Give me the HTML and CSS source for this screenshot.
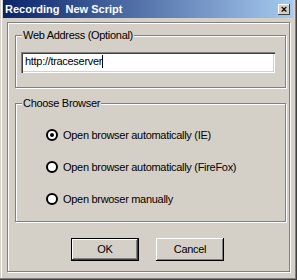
FILE: index.html
```html
<!DOCTYPE html>
<html>
<head>
<title>Recording New Script</title>
<link rel="stylesheet" href="styles.css">
</head>
<body>
<div class="window">
  <div class="titlebar">
    <span class="title">Recording&nbsp; New Script</span>
    <span class="close">&#215;</span>
  </div>
  <div class="frame">
    <fieldset class="group group-address">
      <legend>Web Address (Optional)</legend>
      <div class="textbox">http://traceserver<span class="caret"></span></div>
    </fieldset>
    <fieldset class="group group-browser">
      <legend>Choose Browser</legend>
      <div class="options">
        <label class="radio"><span class="dot checked"></span>Open browser automatically (IE)</label>
        <label class="radio"><span class="dot"></span>Open browser automatically (FireFox)</label>
        <label class="radio"><span class="dot"></span>Open brwoser manually</label>
      </div>
    </fieldset>
    <div class="buttons">
      <span class="button default">OK</span>
      <span class="button">Cancel</span>
    </div>
  </div>
</div>
</body>
</html>
```

FILE: styles.css
```css
/* Classic dialog look */

body
{ margin: 0;
  background: #d4d0c8;
  font-family: "Liberation Sans", Arial, sans-serif;
  font-size: 11px;
  letter-spacing: -0.3px;
  color: #000;
}

div.window
{ box-sizing: border-box;
  width: 297px;
  height: 280px;
  padding: 0 4px 4px 3px;
  box-shadow: inset -1px -1px 0 #404040, inset -2px -2px 0 #808080,
              inset 1px 0 0 #d4d0c8, inset 2px 0 0 #fff;
}

div.titlebar
{ display: flex;
  align-items: center;
  justify-content: space-between;
  height: 18px;
  padding: 0 2px 0 2px;
  background: linear-gradient(to right, #0a246a, #a6caf0);
}

span.title
{ color: #fff;
  font-weight: bold;
  font-size: 11px;
  letter-spacing: 0;
}

span.close
{ box-sizing: border-box;
  width: 12px;
  height: 11px;
  margin-right: 1px;
  background: #d4d0c8;
  box-shadow: inset -1px -1px 0 #404040, inset 1px 1px 0 #fff;
  font-size: 11px;
  line-height: 10px;
  text-align: center;
  font-weight: bold;
  letter-spacing: 0;
}

div.frame
{ box-sizing: border-box;
  width: 283px;
  height: 250px;
  margin: 4px 0 0 4px;
  padding: 6px 3px 0 7px;
  border: 1px solid #808080;
  box-shadow: inset 1px 1px 0 #fff, 1px 1px 0 #fff;
}

fieldset.group
{ margin: 0;
  padding: 0;
  border: 1px solid #808080;
  box-shadow: inset 1px 1px 0 #fff, 1px 1px 0 #fff;
}

fieldset.group legend
{ margin-left: 6px;
  padding: 0 1px;
  line-height: 13px;
  background: #d4d0c8;
}

fieldset.group-address
{ box-sizing: border-box;
  height: 59px;
  padding-top: 10px;
}

div.textbox
{ box-sizing: border-box;
  width: 254px;
  height: 21px;
  margin-left: 5px;
  padding: 3px 0 0 4px;
  background: #fff;
  box-shadow: inset 1px 1px 0 #808080, inset 2px 2px 0 #404040,
              inset -1px -1px 0 #fff, inset -2px -2px 0 #d4d0c8;
}

span.caret
{ display: inline-block;
  width: 1px;
  height: 13px;
  vertical-align: -3px;
  background: #000;
}

fieldset.group-browser
{ box-sizing: border-box;
  height: 125px;
  margin-top: 9px;
}

div.options
{ display: flex;
  flex-direction: column;
  gap: 20px;
  padding: 19px 0 0 30px;
}

label.radio
{ display: flex;
  align-items: center;
  gap: 5px;
  height: 12px;
}

span.dot
{ box-sizing: border-box;
  width: 12px;
  height: 12px;
  border-radius: 50%;
  border: 2px solid #000;
  background: #fff;
  display: flex;
  align-items: center;
  justify-content: center;
}

span.dot.checked::after
{ content: "";
  width: 4px;
  height: 4px;
  border-radius: 50%;
  background: #000;
}

div.buttons
{ display: flex;
  gap: 17px;
  margin: 16px 0 0 56px;
}

span.button
{ box-sizing: border-box;
  width: 68px;
  height: 23px;
  line-height: 22px;
  text-align: center;
  box-shadow: inset -1px -1px 0 #000, inset 1px 1px 0 #fff,
              inset -2px -2px 0 #808080;
}

span.button.default
{ border: 1px solid #000;
  line-height: 20px;
  box-shadow: inset -1px -1px 0 #404040, inset 1px 1px 0 #fff,
              inset -2px -2px 0 #808080;
}
```
